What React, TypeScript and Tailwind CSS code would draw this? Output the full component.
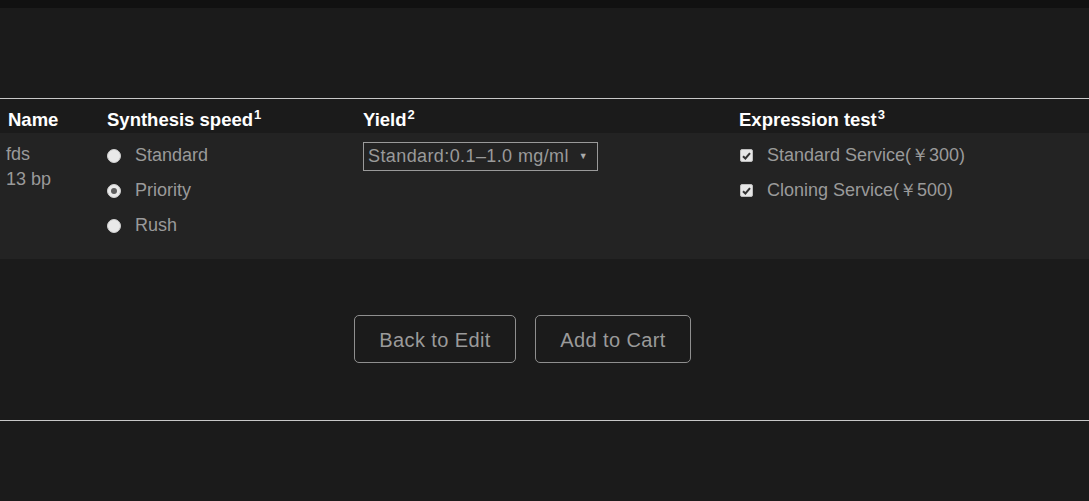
import { useState } from 'react';

const speeds = ['Standard', 'Priority', 'Rush'];
const tests = [
  { label: 'Standard Service(￥300)', checked: true },
  { label: 'Cloning Service(￥500)', checked: true },
];

function Radio({ on }: { on: boolean }) {
  return (
    <span className="w-[14px] h-[14px] rounded-full bg-[#e9e9e9] border border-[#cfcfcf] flex items-center justify-center shrink-0">
      {on && <span className="w-[6px] h-[6px] rounded-full bg-[#5e5e5e]" />}
    </span>
  );
}

function Check({ on }: { on: boolean }) {
  return (
    <span className="w-[13px] h-[13px] rounded-[2px] bg-[#e6e6e6] border border-[#bdbdbd] flex items-center justify-center shrink-0">
      {on && (
        <svg width="9" height="8" viewBox="0 0 9 8">
          <path d="M1 4.2 L3.4 6.5 L8 1.2" stroke="#333" strokeWidth="2" fill="none" />
        </svg>
      )}
    </span>
  );
}

export default function App() {
  const [speed, setSpeed] = useState(1);

  return (
    <div className="min-h-screen bg-[#1b1b1b] font-['Liberation_Sans',Arial,sans-serif]">
      <div className="h-2 bg-[#111111]" />

      <div className="mt-[90px] border-t border-[#c8c8c8]">
        <div className="grid grid-cols-[107px_256px_376px_1fr] h-[34px] items-end pb-[1px] text-white font-bold text-[18.5px] leading-[24px]">
          <div className="pl-2">Name</div>
          <div>Synthesis speed<span className="text-[13px] align-[7px] ml-[1px]">1</span></div>
          <div>Yield<span className="text-[13px] align-[7px] ml-[1px]">2</span></div>
          <div>Expression test<span className="text-[13px] align-[7px] ml-[1px]">3</span></div>
        </div>

        <div className="grid grid-cols-[107px_256px_376px_1fr] h-[126px] bg-[#232323] text-[#9a9a9a] text-[18px] pt-[9px]">
          <div className="pl-[6px] leading-[25px]">
            <div>fds</div>
            <div>13 bp</div>
          </div>

          <div className="flex flex-col -mt-[4px]">
            {speeds.map((s, i) => (
              <label key={s} className="flex items-center gap-[14px] h-[35px] cursor-pointer" onClick={() => setSpeed(i)}>
                <Radio on={speed === i} />
                <span>{s}</span>
              </label>
            ))}
          </div>

          <div>
            <div className="w-[235px] h-[29px] border border-[#9a9a9a] flex items-center justify-between pl-[4px] pr-[9px] text-[18px] tracking-[0.4px] mt-[0px]">
              <span>Standard:0.1–1.0 mg/ml</span>
              <span className="text-[9px] text-[#aaa]">▼</span>
            </div>
          </div>

          <div className="flex flex-col -mt-[4px]">
            {tests.map(t => (
              <label key={t.label} className="flex items-center gap-[14px] h-[35px] pl-[1px]">
                <Check on={t.checked} />
                <span>{t.label}</span>
              </label>
            ))}
          </div>
        </div>

        <div className="flex gap-[19px] pl-[354px] mt-[56px]">
          <button className="w-[162px] h-[48px] border border-[#8f8f8f] rounded-[5px] text-[#9a9a9a] text-[20px] tracking-[0.4px] pt-[2px]">
            Back to Edit
          </button>
          <button className="w-[156px] h-[48px] border border-[#8f8f8f] rounded-[5px] text-[#9a9a9a] text-[20px] tracking-[0.4px] pt-[2px]">
            Add to Cart
          </button>
        </div>

        <div className="mt-[57px] border-t border-[#c8c8c8]" />
      </div>
    </div>
  );
}
